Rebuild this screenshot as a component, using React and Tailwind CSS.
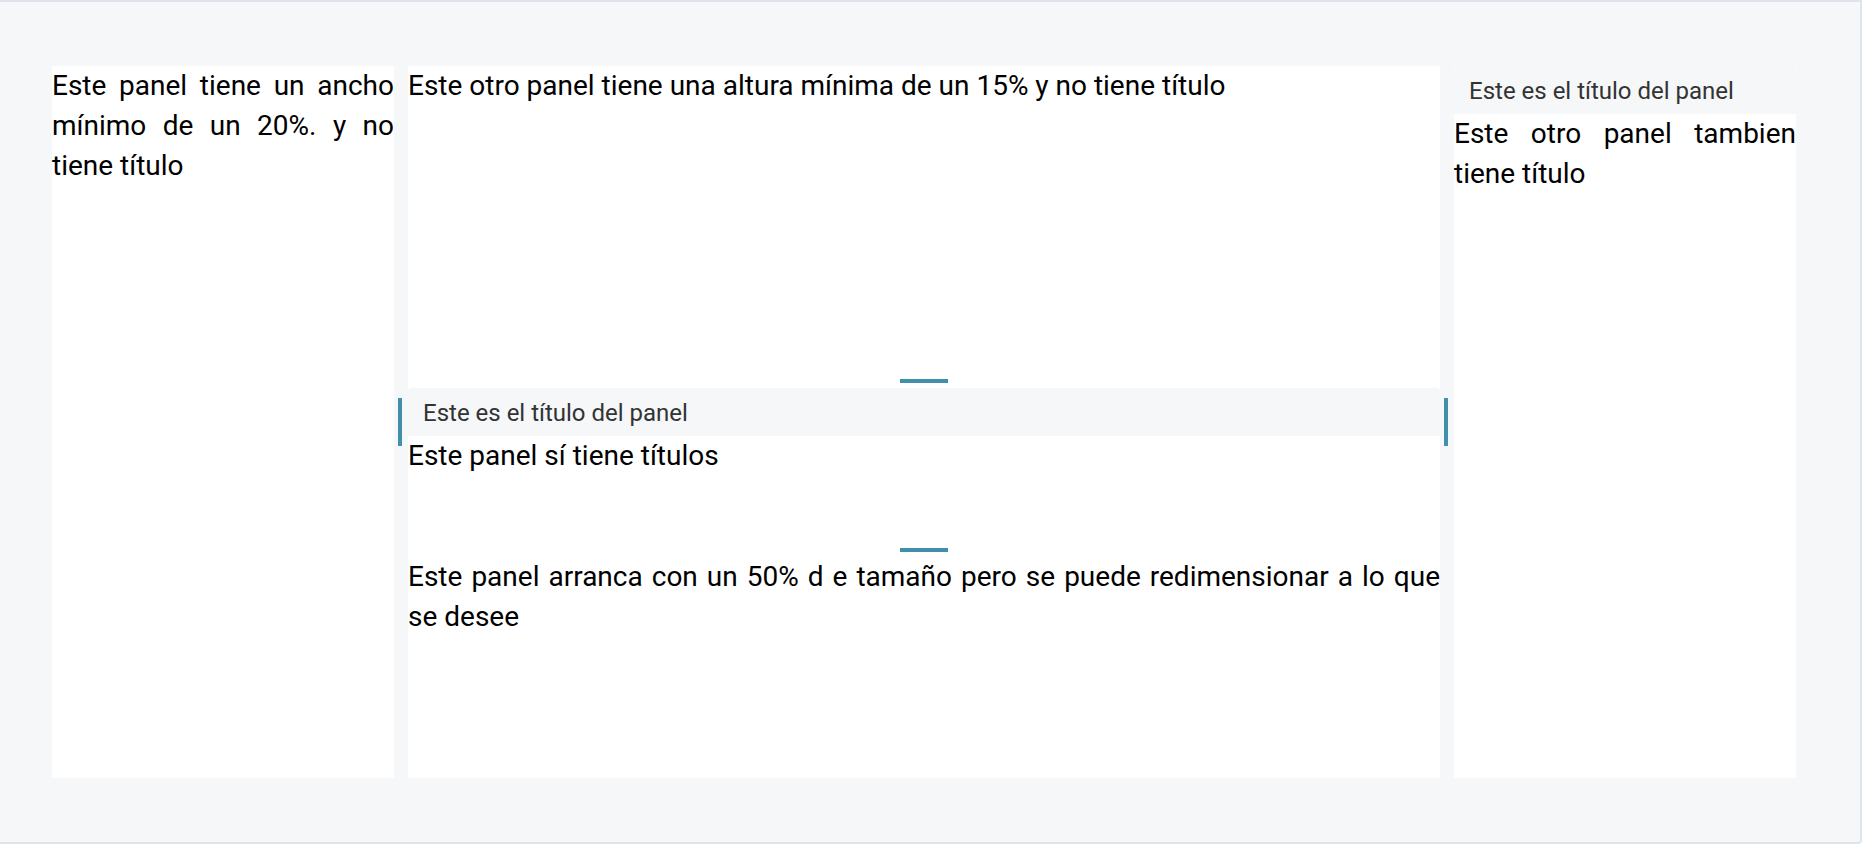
import React from 'react';

const font = { fontFamily: 'Roboto, "Noto Sans", sans-serif' };

function Panel({ title, children, className = '' }) {
  return (
    <div className={`bg-white flex flex-col ${className}`}>
      {title && (
        <div className="h-12 shrink-0 flex items-center pl-[15px] pr-4 pt-px rounded-t-[4px] bg-[#f5f7f9] text-[24px] text-[#333333]">
          {title}
        </div>
      )}
      <div className="text-[28px] leading-[40px] text-black text-justify">{children}</div>
    </div>
  );
}

function VGutter() {
  return (
    <div className="w-[14px] shrink-0 flex items-center justify-center pr-[3px]">
      <div className="w-1 h-12 bg-[#428fab]" />
    </div>
  );
}

function HGutter() {
  return (
    <div className="h-[14px] shrink-0 bg-white flex items-center justify-center">
      <div className="w-12 h-1 bg-[#428fab]" />
    </div>
  );
}

export default function App() {
  return (
    <div style={font} className="w-[1862px] h-[844px] bg-[#f5f7f9] border-t-2 border-b-2 border-r-2 border-[#dde4ec] rounded-br-[4px] pl-[52px] pr-16 pt-16 pb-16">
      <div className="flex h-[712px]">
        {/* Left column */}
        <Panel className="w-[342px] shrink-0">
          Este panel tiene un ancho mínimo de un 20%. y no tiene título
        </Panel>

        <VGutter />

        {/* Middle column */}
        <div className="flex-1 flex flex-col">
          <Panel className="h-[308px] shrink-0">
            Este otro panel tiene una altura mínima de un 15% y no tiene título
          </Panel>
          <HGutter />
          <Panel title="Este es el título del panel" className="h-[155px] shrink-0">
            Este panel sí tiene títulos
          </Panel>
          <HGutter />
          <Panel className="flex-1">
            Este panel arranca con un 50% d e tamaño pero se puede redimensionar a lo que se desee
          </Panel>
        </div>

        <VGutter />

        {/* Right column */}
        <Panel title="Este es el título del panel" className="w-[342px] shrink-0">
          Este otro panel tambien tiene título
        </Panel>
      </div>
    </div>
  );
}
